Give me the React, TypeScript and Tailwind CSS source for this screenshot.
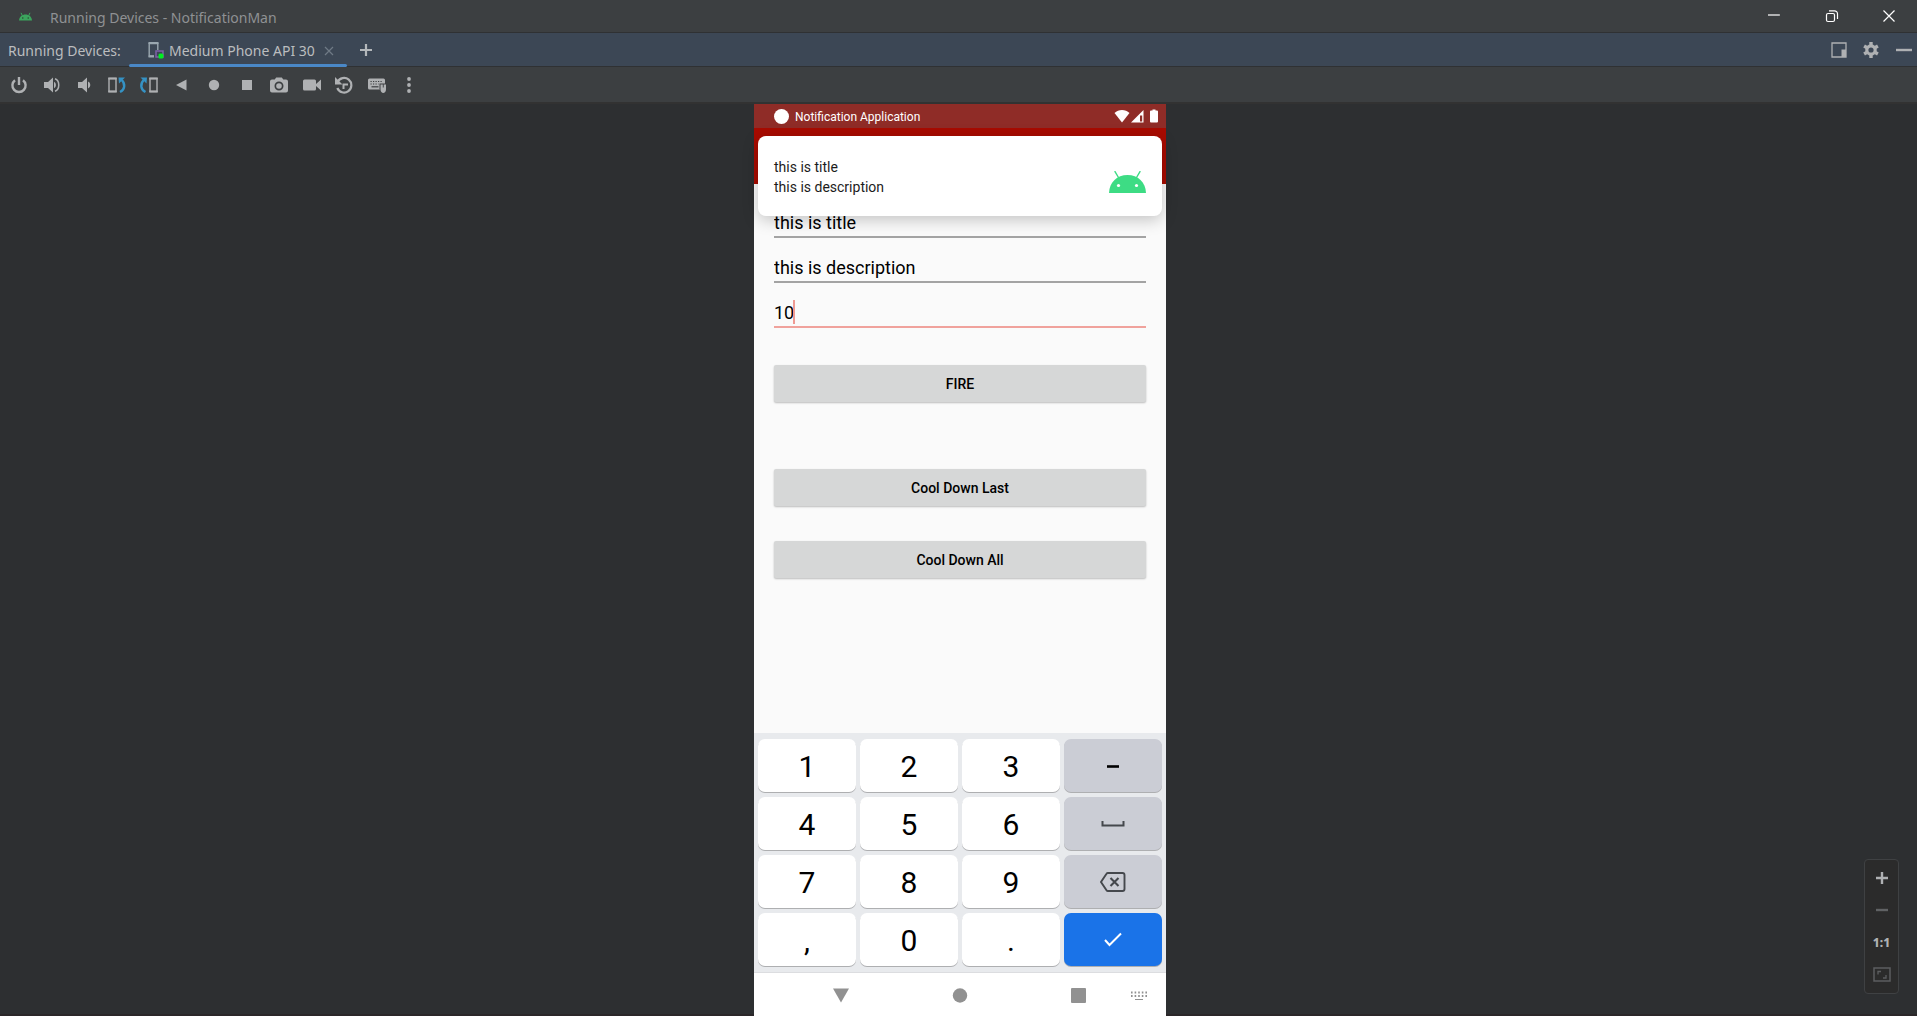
import React from "react";

const ui = "font-['Noto_Sans','Open_Sans',sans-serif]";

type IconProps = { children: React.ReactNode; size?: number; className?: string };

function Icon({ children, size = 18, className = "" }: IconProps) {
  return (
    <svg width={size} height={size} viewBox={`0 0 ${size} ${size}`} fill="none" aria-hidden="true" className={`shrink-0 ${className}`}>
      {children}
    </svg>
  );
}

const tools: { label: string; icon: React.ReactNode }[] = [
  {
    label: "Power",
    icon: (
      <Icon>
        <path d="M5 4.2A6.6 6.6 0 1 0 13 4.2" stroke="currentColor" strokeWidth="2.4" />
        <path d="M9 1v8" stroke="currentColor" strokeWidth="2.4" />
      </Icon>
    ),
  },
  {
    label: "Volume up",
    icon: (
      <Icon>
        <path d="M1 6h4l5-4.5v15L5 12H1z" fill="currentColor" />
        <path d="M11 5.8a3.6 3.6 0 0 1 0 6.4z" fill="currentColor" />
        <path d="M12 2.8c5 1.6 5 10.8 0 12.4" stroke="currentColor" strokeWidth="1.5" />
      </Icon>
    ),
  },
  {
    label: "Volume down",
    icon: (
      <Icon>
        <path d="M3 6h4l5-4.5v15L7 12H3z" fill="currentColor" />
        <path d="M13 5.5a3.8 3.8 0 0 1 0 7z" fill="currentColor" />
      </Icon>
    ),
  },
  {
    label: "Rotate left",
    icon: (
      <Icon size={20}>
        <path d="M2 3.500h7v13H2z" stroke="#afb1b3" strokeWidth="1.4" />
        <path d="M1.300 3.500h8.400M1.300 16.500h8.400" stroke="#afb1b3" strokeWidth="2" />
        <path d="M13 17c5-2.500 5.500-8 1.800-12" stroke="#3592c4" strokeWidth="2.4" />
        <path d="M11.500 2.500H18l-6 6z" fill="#3592c4" />
      </Icon>
    ),
  },
  {
    label: "Rotate right",
    icon: (
      <Icon size={20}>
        <path d="M11 3.500h7v13h-7z" stroke="#afb1b3" strokeWidth="1.4" />
        <path d="M10.300 3.500h8.400M10.300 16.500h8.400" stroke="#afb1b3" strokeWidth="2" />
        <path d="M6.500 17c-5-2.500-5.500-8-1.800-12" stroke="#3592c4" strokeWidth="2.4" />
        <path d="M8 2.500H1.500l6 6z" fill="#3592c4" />
      </Icon>
    ),
  },
  { label: "Back", icon: <Icon><path d="M13.500 3.500v11L3 9z" fill="currentColor" /></Icon> },
  { label: "Home", icon: <Icon><circle cx="9" cy="9" r="5.2" fill="currentColor" /></Icon> },
  { label: "Overview", icon: <Icon><path d="M4 4h10v10H4z" fill="currentColor" /></Icon> },
  {
    label: "Take screenshot",
    icon: (
      <Icon>
        <path fillRule="evenodd" fill="currentColor" d="M6.200 1.500h5.600l1.500 2H16a2 2 0 0 1 2 2v9a2 2 0 0 1-2 2H2a2 2 0 0 1-2-2v-9a2 2 0 0 1 2-2h2.700zM9 5.500a4.500 4.500 0 1 0 0 9 4.500 4.500 0 0 0 0-9z" />
        <circle cx="9" cy="10" r="2.8" fill="currentColor" />
      </Icon>
    ),
  },
  {
    label: "Record screen",
    icon: <Icon><path d="M1.500 3.500h10q1.500 0 1.500 1.500v3l5-4.500v11L13 10v3q0 1.500-1.500 1.500h-10Q0 14.500 0 13V5q0-1.500 1.500-1.500z" fill="currentColor" /></Icon>,
  },
  {
    label: "Snapshots",
    icon: (
      <Icon>
        <path d="M2.500 6A7.300 7.300 0 1 1 2.300 12" stroke="currentColor" strokeWidth="2.2" />
        <path d="M0 1v7.500h7.500z" fill="currentColor" />
        <path d="M8.500 13V8.500H13" stroke="currentColor" strokeWidth="2" />
      </Icon>
    ),
  },
  {
    label: "Hardware input",
    icon: (
      <Icon size={20}>
        <rect x="1" y="3.500" width="17" height="11" rx="1.5" fill="currentColor" />
        <path d="M3.500 6.500h12M3.500 9h8" stroke="#3c3f41" strokeWidth="1.2" strokeDasharray="1.2 1.3" />
        <path d="M4.500 11.800h7" stroke="#3c3f41" strokeWidth="1.2" />
        <path d="M12.500 8.500H20v5a3.800 3.800 0 0 1-7.500 0z" fill="#3c3f41" />
        <path d="M13.500 9.500h2.300v3h-2.300zM16.700 9.500H19v3h-2.300zM13.500 12.500H19v2c0 4.500-5.500 4.500-5.500 0z" fill="currentColor" />
      </Icon>
    ),
  },
  {
    label: "More",
    icon: (
      <Icon>
        <circle cx="9" cy="3" r="1.9" fill="currentColor" />
        <circle cx="9" cy="9" r="1.9" fill="currentColor" />
        <circle cx="9" cy="15" r="1.9" fill="currentColor" />
      </Icon>
    ),
  },
];

function AndroidHead({ className }: { className: string }) {
  return (
    <svg viewBox="0 0 37 22" className={className} aria-hidden="true">
      <path d="M0 22C.5 11 8 4 18.500 4S36.500 11 37 22z" fill="currentColor" />
      <path d="M9.500 6.500 6 .6M27.500 6.500 31 .6" stroke="currentColor" strokeWidth="1.4" strokeLinecap="round" />
      <circle cx="9.500" cy="14.500" r="1.6" fill="#fff" />
      <circle cx="27.500" cy="14.500" r="1.6" fill="#fff" />
    </svg>
  );
}

function TitleBar() {
  return (
    <header className="flex h-[33px] shrink-0 items-center border-b border-[#2f3133] bg-[#3c3f41]">
      <svg width="13" height="9" viewBox="0 0 13 9" className="ml-[19px]" aria-hidden="true">
        <path d="M0 8.500C.3 4.800 3 2.500 6.500 2.500s6.200 2.300 6.500 6z" fill="#3ba55d" />
        <path d="M3.500 4 2 .8M9.500 4 11 .8" stroke="#3ba55d" />
        <circle cx="3.800" cy="6" r=".7" fill="#2b3b30" />
        <circle cx="9.200" cy="6" r=".7" fill="#2b3b30" />
      </svg>
      <h1 className="ml-[18px] pt-1 text-[14px] leading-5 text-[#8f9193]">Running Devices - NotificationMan</h1>
      <div className="ml-auto flex pr-0 text-white">
        <button aria-label="Minimize" className="grid h-8 w-[58px] place-items-center">
          <Icon size={14}><path d="M1 6h12" stroke="currentColor" strokeWidth="1.2" /></Icon>
        </button>
        <button aria-label="Restore" className="grid h-8 w-[58px] place-items-center">
          <Icon size={14}>
            <rect x="1.500" y="4.500" width="8" height="8" rx="1.5" stroke="currentColor" strokeWidth="1.2" />
            <path d="M4 1.800h5.500a3 3 0 0 1 3 3V10" stroke="currentColor" strokeWidth="1.2" />
          </Icon>
        </button>
        <button aria-label="Close" className="grid h-8 w-[56px] place-items-center">
          <Icon size={14}><path d="m1.500 1.500 11 11M12.500 1.500l-11 11" stroke="currentColor" strokeWidth="1.2" /></Icon>
        </button>
      </div>
    </header>
  );
}

function TabBar() {
  return (
    <div className="flex h-[34px] shrink-0 items-stretch border-b border-[#2f3133] bg-[#3c4755] text-[14px] leading-5 text-[#bbbdbf]">
      <span className="flex w-[129px] items-center pl-2 pt-[2px]">Running Devices:</span>
      <div role="tablist" className="flex">
        <div className="relative flex w-[218px] items-center pl-[19px]">
          <svg width="17" height="18" viewBox="0 0 17 18" fill="none" className="shrink-0" aria-hidden="true">
            <path d="M6 15H1.200V2.500h8.600V9" stroke="#9aa7b0" strokeWidth="1.4" />
            <path d="M.5 2h10M.5 15.500H6" stroke="#9aa7b0" strokeWidth="2" />
            <rect x="8" y="10" width="7" height="6" stroke="#7d62a8" strokeWidth="1.5" />
            <rect x="10.500" y="12.500" width="5" height="5" rx="1.5" fill="#00f020" />
          </svg>
          <button role="tab" aria-selected="true" className="ml-1 whitespace-nowrap pt-[2px]">Medium Phone API 30</button>
          <button aria-label="Close tab" className="absolute right-3 grid h-5 w-3 place-items-center pt-[2px] text-[#6f7a85]">
            <Icon size={10}><path d="m1 1 8 8M9 1 1 9" stroke="currentColor" strokeWidth="1.2" /></Icon>
          </button>
          <span className="absolute inset-x-0 -bottom-px h-[3px] rounded-full bg-[#4a88c7]" />
        </div>
      </div>
      <button aria-label="New tab" className="ml-[10px] grid w-[18px] place-items-center text-[#b4b8bb]">
        <Icon size={14}><path d="M7 1v12M1 7h12" stroke="currentColor" strokeWidth="2.2" /></Icon>
      </button>
      <div className="ml-auto flex items-center text-[#afb1b3]">
        <button aria-label="Window mode" className="grid h-8 w-8 place-items-center">
          <Icon size={16}>
            <path d="M1 1h14v14H1z" stroke="currentColor" strokeWidth="1.3" />
            <path d="M10.500 7.500H15V15h-4.500z" fill="currentColor" />
          </Icon>
        </button>
        <button aria-label="Settings" className="grid h-8 w-8 place-items-center">
          <Icon size={16}>
            <circle cx="8" cy="8" r="4.200" stroke="currentColor" strokeWidth="3.2" />
            <path d="M8 0v3M8 13v3M1.100 4l2.600 1.500M12.300 10.500l2.600 1.500M1.100 12l2.600-1.500M12.300 5.500 14.900 4" stroke="currentColor" strokeWidth="3.4" />
          </Icon>
        </button>
        <button aria-label="Hide" className="grid h-8 w-[30px] place-items-center pl-1">
          <Icon size={16}><path d="M0 8h16" stroke="currentColor" strokeWidth="2.4" /></Icon>
        </button>
      </div>
    </div>
  );
}

function Toolbar() {
  return (
    <div className="flex h-[35px] shrink-0 items-center bg-[#3c3f41] pl-[3px]">
      <div className="flex w-[422px] justify-between text-[#afb1b3]">
        {tools.map((t) => (
          <button key={t.label} aria-label={t.label} className="grid h-8 w-8 place-items-center">{t.icon}</button>
        ))}
      </div>
    </div>
  );
}

function StatusBar() {
  return (
    <div className="flex h-6 shrink-0 items-center bg-[#8f2c27] pl-5 pr-[6px] text-white">
      <span className="h-[15px] w-[15px] rounded-full bg-white" />
      <span className="ml-[6px] pt-[2px] text-[12px] leading-4">Notification Application</span>
      <svg width="46" height="14" viewBox="0 0 46 14" className="ml-auto" aria-hidden="true">
        <path d="M.5 4C4.500 0 11.500 0 15.500 4L8 13.500z" fill="#fff" />
        <path d="M17 13.500 29.500 1v12.500z" fill="#fff" />
        <path d="M26 6.500h2.200v6H26z" fill="#8f2c27" />
        <path d="M37 1.500h1.500V.5h3v1H43q1 0 1 1v10q0 1-1 1h-6q-1 0-1-1v-10q0-1 1-1z" fill="#fff" />
      </svg>
    </div>
  );
}

const actionButton =
  "h-[37px] w-full rounded-[2px] bg-[#d6d7d7] text-[14px] font-medium leading-5 text-black shadow-[0_1px_2px_rgba(0,0,0,0.25)]";
const field = "h-7 w-full border-b-2 bg-transparent pb-[2px] text-[18px] leading-6 text-black outline-none";

const keyIcons = {
  minus: <Icon size={26}><path d="M7 13.500h12" stroke="#000" strokeWidth="2.6" /></Icon>,
  space: <Icon size={26}><path d="M2.500 10v4.500h21V10" stroke="#45484d" strokeWidth="2" /></Icon>,
  delete: (
    <Icon size={26}>
      <path d="M8 4h14.500q2 0 2 2v14q0 2-2 2H8q-1 0-1.500-.8L1 13l5.500-8.200Q7 4 8 4z" stroke="#45484d" strokeWidth="1.9" />
      <path d="m10.500 9 8 8M18.500 9l-8 8" stroke="#45484d" strokeWidth="2.1" />
    </Icon>
  ),
  done: <Icon size={26}><path d="m5 13 4.500 5L21 6.500" stroke="#fff" strokeWidth="2" /></Icon>,
};

const keys: { label: string; kind: "digit" | "side" | "enter"; icon?: React.ReactNode }[] = [
  { label: "1", kind: "digit" },
  { label: "2", kind: "digit" },
  { label: "3", kind: "digit" },
  { label: "-", kind: "side", icon: keyIcons.minus },
  { label: "4", kind: "digit" },
  { label: "5", kind: "digit" },
  { label: "6", kind: "digit" },
  { label: "Space", kind: "side", icon: keyIcons.space },
  { label: "7", kind: "digit" },
  { label: "8", kind: "digit" },
  { label: "9", kind: "digit" },
  { label: "Delete", kind: "side", icon: keyIcons.delete },
  { label: ",", kind: "digit" },
  { label: "0", kind: "digit" },
  { label: ".", kind: "digit" },
  { label: "Done", kind: "enter", icon: keyIcons.done },
];

const keyColors = {
  digit: "bg-white pt-[2px]",
  side: "bg-[#cbcdd5]",
  enter: "bg-[#1a73e8]",
};

function Keypad() {
  return (
    <div className="grid shrink-0 grid-cols-4 gap-x-1 gap-y-[5px] bg-[#e8eaed] px-1 py-[6px]">
      {keys.map((k) => (
        <button
          key={k.label}
          aria-label={k.label}
          className={`grid h-[53px] place-items-center rounded-[7px] text-[30px] leading-9 text-black shadow-[0_1px_0_rgba(0,0,0,0.25)] ${keyColors[k.kind]}`}
        >
          {k.icon ?? k.label}
        </button>
      ))}
    </div>
  );
}

function NavBar() {
  return (
    <nav className="flex h-11 shrink-0 items-center border-t border-[#dcdde0] bg-white pl-[71px] text-[#919191]">
      <button aria-label="Back" className="grid h-8 w-8 place-items-center">
        <Icon><path d="M1 2.500h16l-8 14z" fill="currentColor" /></Icon>
      </button>
      <button aria-label="Home" className="ml-[87px] grid h-8 w-8 place-items-center">
        <Icon><circle cx="9" cy="9.500" r="7.200" fill="currentColor" /></Icon>
      </button>
      <button aria-label="Recents" className="ml-[87px] grid h-8 w-8 place-items-center">
        <Icon><rect x="1" y="2" width="15" height="15" rx="1" fill="currentColor" /></Icon>
      </button>
      <button aria-label="Switch keyboard" className="ml-7 grid h-8 w-8 place-items-center">
        <Icon>
          <path d="M1 6.500h16M1 10h16" stroke="currentColor" strokeWidth="2" strokeDasharray="1.6 2" />
          <path d="M5 13.500h8" stroke="currentColor" />
        </Icon>
      </button>
    </nav>
  );
}

function Phone() {
  return (
    <section aria-label="Device screen" className="relative flex w-[412px] flex-col bg-[#fafafa] font-[Roboto,sans-serif]">
      <StatusBar />
      <div className="h-14 shrink-0 bg-[#a80b00]" />
      <form className="flex flex-1 flex-col px-5 pt-[26px]" onSubmit={(e) => e.preventDefault()}>
        <div className="flex flex-col gap-[17px]">
          <input aria-label="Title" defaultValue="this is title" className={`${field} border-[#a3a3a3]`} />
          <input aria-label="Description" defaultValue="this is description" className={`${field} border-[#a3a3a3]`} />
          <div className="relative flex">
            <input aria-label="Delay" defaultValue="10" className={`${field} border-[#f0a29c]`} />
            <span className="absolute bottom-1 left-[19px] h-6 w-[2px] bg-[#ef9a93]" />
          </div>
        </div>
        <button className={`${actionButton} mt-[37px]`}>FIRE</button>
        <button className={`${actionButton} mt-[67px]`}>Cool Down Last</button>
        <button className={`${actionButton} mt-[35px]`}>Cool Down All</button>
      </form>
      <Keypad />
      <NavBar />
      <article className="absolute inset-x-1 top-8 flex h-20 items-center justify-between rounded-lg bg-white px-4 text-[14px] leading-5 text-[#1c1c1c] shadow-[0_4px_16px_rgba(0,0,0,0.22)]">
        <div className="pt-[2px]">
          <p>this is title</p>
          <p>this is description</p>
        </div>
        <AndroidHead className="mt-3 h-[22px] w-[37px] text-[#3ddc84]" />
      </article>
    </section>
  );
}

function ZoomControls() {
  return (
    <div className="absolute bottom-[22px] right-[18px] flex w-[35px] flex-col items-center rounded-[4px] border border-[#3f4143] bg-[#2b2b2b] py-[2px] text-[#afb1b3]">
      <button aria-label="Zoom in" className="grid h-8 w-8 place-items-center">
        <Icon size={14}><path d="M7 1v12M1 7h12" stroke="currentColor" strokeWidth="2.4" /></Icon>
      </button>
      <button aria-label="Zoom out" className="grid h-8 w-8 place-items-center text-[#606264]">
        <Icon size={14}><path d="M1 7h12" stroke="currentColor" strokeWidth="2.4" /></Icon>
      </button>
      <button className="grid h-[33px] w-8 place-items-center text-[12px] font-extrabold leading-4">1:1</button>
      <button aria-label="Zoom to fit" className="grid h-8 w-8 place-items-center text-[#5c5e60]">
        <Icon>
          <path d="M1 2h16v13H1z" stroke="currentColor" strokeWidth="1.5" />
          <path d="M5 8.500V5.500h3M13 9v3h-3" stroke="currentColor" strokeWidth="1.3" />
        </Icon>
      </button>
    </div>
  );
}

export default function App() {
  return (
    <div className={`flex min-h-screen flex-col bg-[#2d2f31] ${ui}`}>
      <TitleBar />
      <TabBar />
      <Toolbar />
      <main className="relative flex flex-1 justify-center border-t-2 border-[#323232] pl-[3px]">
        <div className="absolute inset-x-0 bottom-0 h-[2px] bg-[#2b2729]" />
        <Phone />
        <ZoomControls />
      </main>
    </div>
  );
}
